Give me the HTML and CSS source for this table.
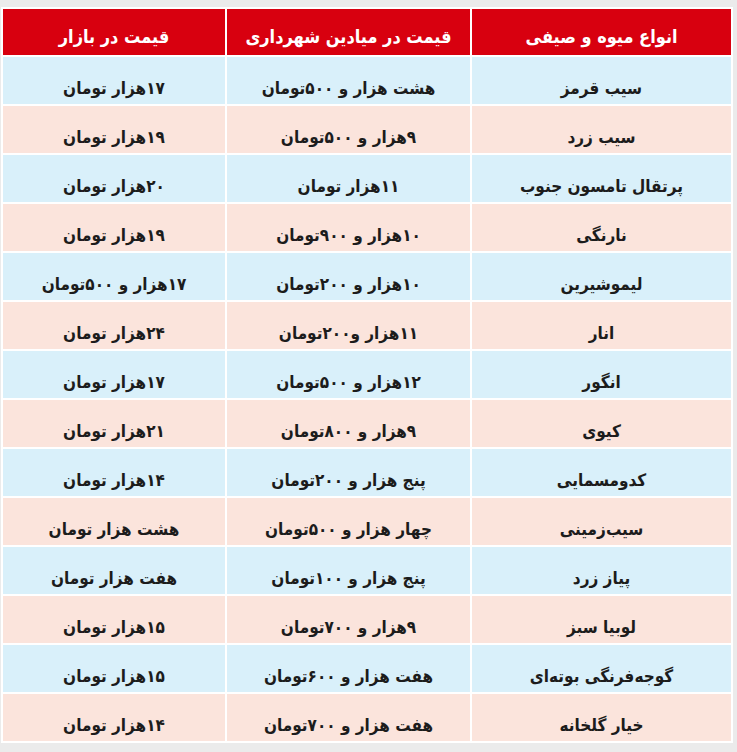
FILE: index.html
```html
<!DOCTYPE html>
<html lang="fa" dir="rtl">
<head>
<meta charset="utf-8">
<link rel="stylesheet" href="styles.css">
</head>
<body>
<div class="table">
  <div class="cell head">انواع میوه و صیفی</div>
  <div class="cell head">قیمت در میادین شهرداری</div>
  <div class="cell head">قیمت در بازار</div>

  <div class="cell blue">سیب قرمز</div>
  <div class="cell blue">هشت هزار و ۵۰۰تومان</div>
  <div class="cell blue">۱۷هزار تومان</div>

  <div class="cell pink">سیب زرد</div>
  <div class="cell pink">۹هزار و ۵۰۰تومان</div>
  <div class="cell pink">۱۹هزار تومان</div>

  <div class="cell blue">پرتقال تامسون جنوب</div>
  <div class="cell blue">۱۱هزار تومان</div>
  <div class="cell blue">۲۰هزار تومان</div>

  <div class="cell pink">نارنگی</div>
  <div class="cell pink">۱۰هزار و ۹۰۰تومان</div>
  <div class="cell pink">۱۹هزار تومان</div>

  <div class="cell blue">لیموشیرین</div>
  <div class="cell blue">۱۰هزار و ۲۰۰تومان</div>
  <div class="cell blue">۱۷هزار و ۵۰۰تومان</div>

  <div class="cell pink">انار</div>
  <div class="cell pink">۱۱هزار و۲۰۰تومان</div>
  <div class="cell pink">۲۴هزار تومان</div>

  <div class="cell blue">انگور</div>
  <div class="cell blue">۱۲هزار و ۵۰۰تومان</div>
  <div class="cell blue">۱۷هزار تومان</div>

  <div class="cell pink">کیوی</div>
  <div class="cell pink">۹هزار و ۸۰۰تومان</div>
  <div class="cell pink">۲۱هزار تومان</div>

  <div class="cell blue">کدومسمایی</div>
  <div class="cell blue">پنج هزار و ۲۰۰تومان</div>
  <div class="cell blue">۱۴هزار تومان</div>

  <div class="cell pink">سیب‌زمینی</div>
  <div class="cell pink">چهار هزار و ۵۰۰تومان</div>
  <div class="cell pink">هشت هزار تومان</div>

  <div class="cell blue">پیاز زرد</div>
  <div class="cell blue">پنج هزار و ۱۰۰تومان</div>
  <div class="cell blue">هفت هزار تومان</div>

  <div class="cell pink">لوبیا سبز</div>
  <div class="cell pink">۹هزار و ۷۰۰تومان</div>
  <div class="cell pink">۱۵هزار تومان</div>

  <div class="cell blue">گوجه‌فرنگی بوته‌ای</div>
  <div class="cell blue">هفت هزار و ۶۰۰تومان</div>
  <div class="cell blue">۱۵هزار تومان</div>

  <div class="cell pink">خیار گلخانه</div>
  <div class="cell pink">هفت هزار و ۷۰۰تومان</div>
  <div class="cell pink">۱۴هزار تومان</div>
</div>
</body>
</html>
```
FILE: styles.css
```css
html, body {
  margin: 0;
  padding: 0;
  background: #ebebeb;
}
body {
  font-family: "DejaVu Sans Condensed", "DejaVu Sans", sans-serif;
  direction: rtl;
}
.table {
  margin: 7px 4px 0 1px;
  width: 728px;
  background: #ffffff;
  padding: 2px;
  display: grid;
  grid-template-columns: 259px 243px 222px;
  grid-template-rows: 46px;
  grid-auto-rows: 47px;
  gap: 2px;
}
.cell {
  display: flex;
  align-items: center;
  justify-content: center;
  padding-top: 15px;
  box-sizing: border-box;
  font-size: 17px;
  font-weight: bold;
  color: #1c1c1c;
  white-space: nowrap;
}
.head {
  background: #d8000f;
  color: #ffffff;
  font-size: 18px;
  padding-top: 8px;
}
.blue {
  background: #d9f0fa;
}
.pink {
  background: #fbe4dc;
}
```
